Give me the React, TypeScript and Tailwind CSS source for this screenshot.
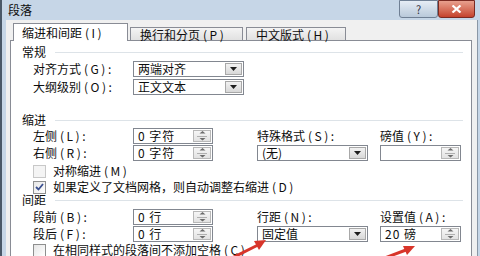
import clsx from "clsx";

// splits "对齐方式 (G):" into the CJK part and a spaced-out access-key part
function Lbl({ text }: { text: string }) {
  const i = text.indexOf("(");
  if (i < 0) return <>{text}</>;
  return (
    <>
      {text.slice(0, i).trimEnd()}
      <span className="ml-[3px] tracking-[2.5px]">{text.slice(i)}</span>
    </>
  );
}

function Header({ title, className }: { title: string; className?: string }) {
  return (
    <div className={clsx("flex items-center h-[14px] pl-[11px] pr-[8px]", className)}>
      <span>{title}</span>
      <div className="flex-1 h-px bg-[#dde3e8] ml-[9px]" />
    </div>
  );
}

function DropBox({ value, className }: { value: string; className?: string }) {
  return (
    <div className={clsx("flex h-[16px] border border-[#828790] bg-white", className)}>
      <span className="flex-1 pl-[4px] leading-[14px] whitespace-nowrap">{value}</span>
      <div className="w-[17px] my-px mr-px border border-[#a8a8a8] bg-gradient-to-b from-[#f2f2f2] to-[#d8d8d8] flex items-center justify-center">
        <svg width="7" height="4" viewBox="0 0 7 4">
          <path d="M0 0h7L3.5 4z" fill="#1e1e1e" />
        </svg>
      </div>
    </div>
  );
}

function SpinBox({ value, className }: { value: string; className?: string }) {
  return (
    <div className={clsx("flex h-[16px] border border-[#828790] bg-white", className)}>
      <span className="flex-1 pl-[4px] leading-[14px] whitespace-nowrap tracking-[1px]">{value}</span>
      <div className="w-[18px] my-px mr-px border border-[#b8b8b8] bg-gradient-to-b from-[#f6f6f6] to-[#e2e2e2] flex flex-col items-center justify-center gap-[2px]">
        <svg width="7" height="3" viewBox="0 0 7 3">
          <path d="M0 3h7L3.5 0z" fill="#6b6b6b" />
        </svg>
        <div className="w-[10px] h-px bg-[#b0b0b0]" />
        <svg width="7" height="3" viewBox="0 0 7 3">
          <path d="M0 0h7L3.5 3z" fill="#6b6b6b" />
        </svg>
      </div>
    </div>
  );
}

function Check({ label, checked, disabled, className }: { label: string; checked?: boolean; disabled?: boolean; className?: string }) {
  return (
    <div className={clsx("flex items-center h-[14px] pl-[22px]", className)}>
      <div
        className={clsx(
          "w-[13px] h-[13px] border flex items-center justify-center",
          disabled ? "border-[#c8c8c8] bg-[#f4f4f4]" : "border-[#8e8f8f] bg-gradient-to-br from-[#e6e6e6] to-white"
        )}
      >
        {checked && (
          <svg width="9" height="8" viewBox="0 0 9 8">
            <path d="M1 4l2.5 2.5L8 1" stroke="#3a4f8f" strokeWidth="1.8" fill="none" />
          </svg>
        )}
      </div>
      <span className="ml-[7px] whitespace-nowrap">
        <Lbl text={label} />
      </span>
    </div>
  );
}

function Row({ label, children }: { label: string; children: React.ReactNode }) {
  return (
    <div className="flex items-center h-[16px]">
      <span className="w-[100px] whitespace-nowrap">
        <Lbl text={label} />
      </span>
      {children}
    </div>
  );
}

export default function App() {
  return (
    <div className="relative w-[480px] h-[256px] overflow-hidden bg-[#c6d6e7] border-l-2 border-[#4a5868] font-['Noto_Sans_CJK_SC',sans-serif] text-[12px] text-[#0d0d0d]">
      {/* title bar */}
      <div className="flex items-start h-[20px]">
        <span className="ml-[6px] mt-[3px] leading-[14px]">段落</span>
        <div className="ml-auto flex mr-[5px]">
          <div className="w-[39px] h-[18px] border border-[#6f7f94] rounded-b-[3px] bg-gradient-to-b from-[#e6edf5] to-[#b9c9da] flex items-center justify-center text-[11px] text-[#334] leading-none">
            ?
          </div>
          <div className="w-[37px] h-[18px] border border-[#7a2a22] rounded-b-[3px] bg-gradient-to-b from-[#e8a08e] to-[#c4412c] flex items-center justify-center">
            <svg width="11" height="8" viewBox="0 0 11 8">
              <path d="M1.5 0.5l8 7M9.5 0.5l-8 7" stroke="white" strokeWidth="2.2" />
            </svg>
          </div>
        </div>
      </div>

      {/* client */}
      <div className="ml-[4px] mr-[2px] h-[236px] bg-[#f0f0f0] border-r border-[#8a97a6] pl-[4px] pr-[5px] pt-[3px]">
        {/* tabs */}
        <div className="flex items-end h-[17px] pl-[3px] relative z-10">
          <div className="w-[115px] h-[18px] -mb-px border border-b-0 border-[#898c95] bg-white pl-[8px] leading-[18px] whitespace-nowrap">
            <Lbl text="缩进和间距(I)" />
          </div>
          <div className="ml-[2px] w-[113px] h-[13px] border border-b-0 border-[#898c95] bg-gradient-to-b from-[#f4f4f4] to-[#e1e1e1] pl-[9px] leading-[13px] whitespace-nowrap">
            <Lbl text="换行和分页(P)" />
          </div>
          <div className="ml-[3px] w-[100px] h-[13px] border border-b-0 border-[#898c95] bg-gradient-to-b from-[#f4f4f4] to-[#e1e1e1] pl-[9px] leading-[13px] whitespace-nowrap">
            <Lbl text="中文版式(H)" />
          </div>
        </div>

        {/* panel */}
        <div className="h-[230px] border border-[#898c95] bg-white">
          <Header title="常规" className="mt-[4px]" />
          <div className="pl-[22px] mt-[2px] flex flex-col gap-[2px]">
            <Row label="对齐方式 (G):">
              <DropBox value="两端对齐" className="w-[111px]" />
            </Row>
            <Row label="大纲级别 (O):">
              <DropBox value="正文文本" className="w-[111px]" />
            </Row>
          </div>

          <Header title="缩进" className="mt-[18px]" />
          <div className="flex pl-[22px] mt-px">
            <div className="w-[224px] flex flex-col gap-px">
              <Row label="左侧 (L):">
                <SpinBox value="0 字符" className="w-[80px]" />
              </Row>
              <Row label="右侧 (R):">
                <SpinBox value="0 字符" className="w-[80px]" />
              </Row>
            </div>
            <div className="flex flex-col gap-px">
              <div className="h-[16px] leading-[16px] flex">
                <span className="w-[123px]">
                  <Lbl text="特殊格式 (S):" />
                </span>
                <span>
                  <Lbl text="磅值 (Y):" />
                </span>
              </div>
              <div className="flex">
                <DropBox value="(无)" className="w-[111px]" />
                <SpinBox value="" className="ml-[12px] w-[81px]" />
              </div>
            </div>
          </div>

          <Check label="对称缩进 (M)" disabled className="mt-[3px]" />
          <Check label="如果定义了文档网格，则自动调整右缩进 (D)" checked className="mt-[2px]" />

          <Header title="间距" className="-mt-px" />
          <div className="flex pl-[22px] mt-[2px]">
            <div className="w-[224px] flex flex-col gap-px">
              <Row label="段前 (B):">
                <SpinBox value="0 行" className="w-[80px]" />
              </Row>
              <Row label="段后 (F):">
                <SpinBox value="0 行" className="w-[80px]" />
              </Row>
            </div>
            <div className="flex flex-col gap-px">
              <div className="h-[16px] leading-[16px] flex">
                <span className="w-[123px]">
                  <Lbl text="行距 (N):" />
                </span>
                <span>
                  <Lbl text="设置值 (A):" />
                </span>
              </div>
              <div className="flex">
                <DropBox value="固定值" className="w-[111px]" />
                <SpinBox value="20 磅" className="ml-[12px] w-[81px]" />
              </div>
            </div>
          </div>

          <Check label="在相同样式的段落间不添加空格 (C)" className="mt-[1px]" />
        </div>
      </div>

      {/* red annotation arrows */}
      <svg className="absolute left-0 top-0 pointer-events-none" width="480" height="256" viewBox="0 0 480 256">
        <path d="M226 260L256 245" stroke="#d8352a" strokeWidth="3" />
        <path d="M264 240l-12 1 5 9z" fill="#d8352a" />
        <path d="M372 262L404 250" stroke="#d8352a" strokeWidth="3" />
        <path d="M413 246l-12 0 4 9z" fill="#d8352a" />
      </svg>
    </div>
  );
}
